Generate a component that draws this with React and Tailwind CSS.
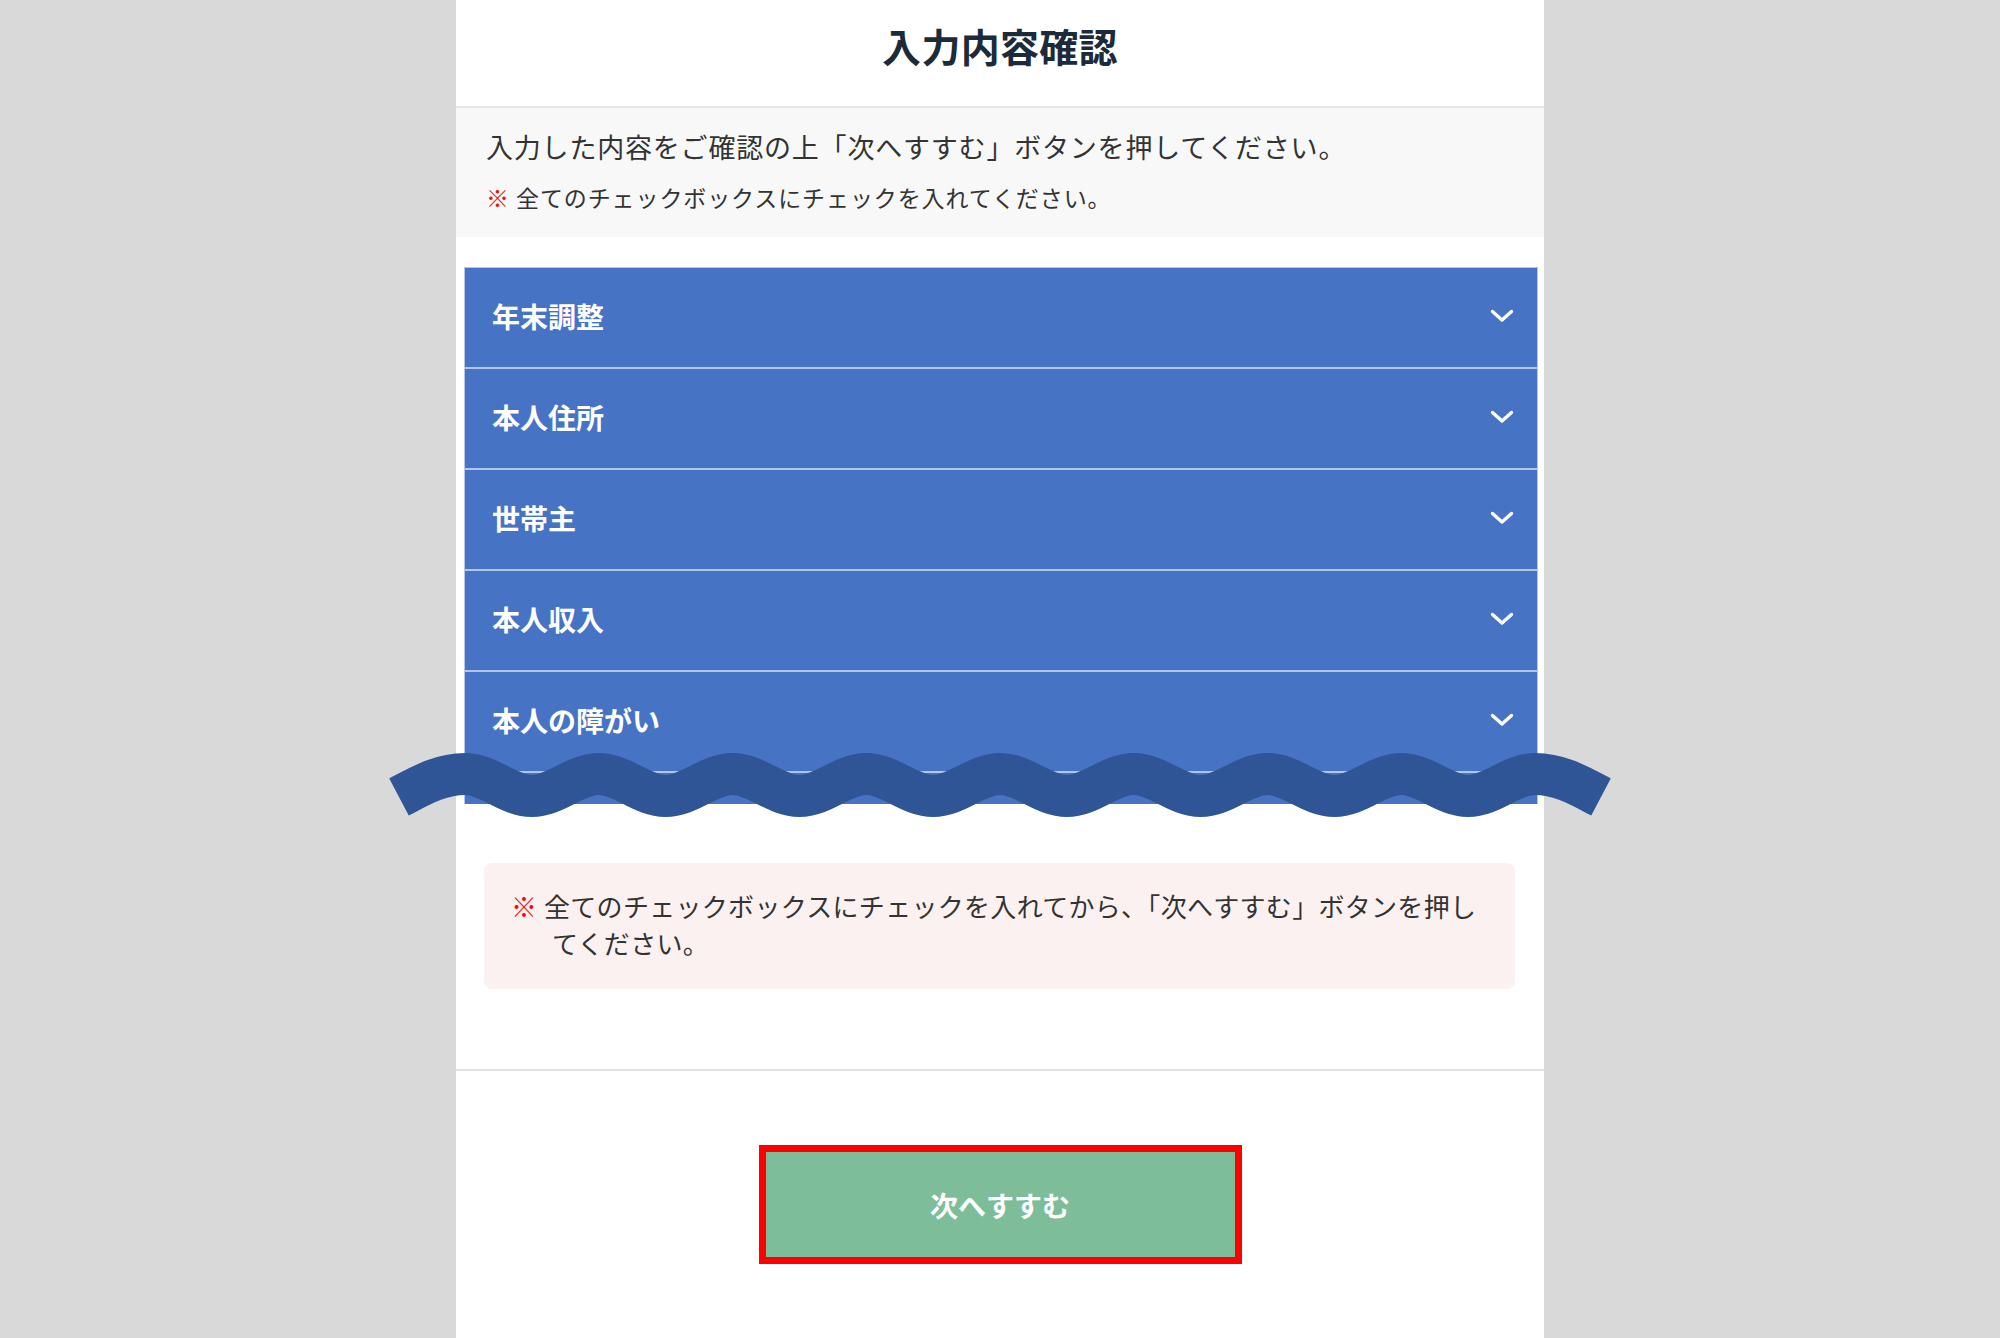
const SECTIONS = ['年末調整', '本人住所', '世帯主', '本人収入', '本人の障がい']

// squiggly "cut" line drawn across the accordion
function wavePath() {
  const crest = 34
  const trough = 56
  const half = 66.875
  let d = `M19,57 C40,46 60,${crest} 85,${crest}`
  let x = 85
  for (let i = 0; i < 16; i++) {
    const from = i % 2 === 0 ? crest : trough
    const to = i % 2 === 0 ? trough : crest
    d += ` C${(x + 24).toFixed(2)},${from} ${(x + half - 24).toFixed(2)},${to} ${(x + half).toFixed(2)},${to}`
    x += half
  }
  d += ` C${(x + 25).toFixed(2)},${crest} ${(x + 45).toFixed(2)},46 ${(x + 66).toFixed(2)},57`
  return d
}

function Chevron() {
  return (
    <svg width="24" height="14" viewBox="0 0 24 14" className="shrink-0">
      <polyline
        points="2.5,2.5 12,11 21.5,2.5"
        fill="none"
        stroke="white"
        strokeWidth="3.4"
        strokeLinecap="round"
        strokeLinejoin="round"
      />
    </svg>
  )
}

export default function App() {
  return (
    <div className="h-[1338px] overflow-hidden bg-[#d9d9d9] flex justify-center font-['Noto_Sans_CJK_JP','Noto_Sans',sans-serif]">
      <div className="relative w-[1088px] bg-white flex flex-col">

        {/* Header */}
        <div className="h-[108px] border-b-2 border-[#e6e6e6] pt-[25px] text-center">
          <h1 className="text-[39px] leading-[40px] font-bold text-[#1c2b3b] tracking-[0.3px]">入力内容確認</h1>
        </div>

        {/* Intro */}
        <div className="bg-[#f8f8f8] pl-[30px] pt-[21px] pb-[25px] text-[#333]">
          <p className="text-[27px] leading-[36px] tracking-[0.8px]">
            入力した内容をご確認の上「次へすすむ」ボタンを押してください。
          </p>
          <p className="mt-[17px] text-[23px] leading-[30px] flex">
            <span className="text-[#ee1111]">※</span>
            <span className="ml-[7px] tracking-[0.9px]">全てのチェックボックスにチェックを入れてください。</span>
          </p>
        </div>

        {/* Accordion */}
        <div className="mt-[30px] ml-[8px] mr-[6px] border-t border-x border-[#b3c5ea] bg-[#4773c5]">
          {SECTIONS.map(name => (
            <div
              key={name}
              className="h-[101px] border-b-2 border-[#b3c5ea] flex items-center justify-between pl-[27px] pr-[23px] pb-[3px]"
            >
              <span className="text-white text-[28px] font-bold leading-none">{name}</span>
              <Chevron />
            </div>
          ))}
          <div className="h-[31px]" />
        </div>

        {/* Notice */}
        <div className="mt-[59px] ml-[28px] mr-[29px] h-[126px] rounded-lg bg-[#fcf1f1] pt-[24px] pl-[27px] pr-[36px] flex text-[26px] leading-[37px] text-[#333]">
          <span className="text-[#ee1111] shrink-0">※</span>
          <span className="ml-[7px] tracking-[0.3px]">
            全てのチェックボックスにチェックを入れてから、「次へすすむ」ボタンを押し<br />
            <span className="pl-[8px]">てください。</span>
          </span>
        </div>

        {/* Footer */}
        <div className="mt-[80px] border-t-2 border-[#e3e3e3] flex justify-center pt-[74px]">
          <button className="w-[483px] h-[119px] border-[7px] border-[#ff0000] bg-[#7dbd99] text-white text-[28px] font-bold">
            次へすすむ
          </button>
        </div>

        {/* Wave overlay */}
        <svg
          className="absolute left-[-76px] top-[740px] pointer-events-none"
          width="1240"
          height="90"
          viewBox="0 0 1240 90"
        >
          <path d={wavePath()} fill="none" stroke="#2f5597" strokeWidth="42" strokeLinecap="butt" />
        </svg>
      </div>
    </div>
  )
}
